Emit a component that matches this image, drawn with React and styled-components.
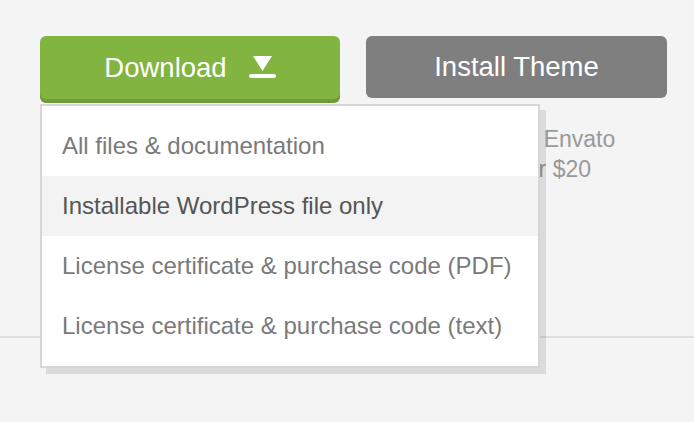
import React from "react";
import styled, { createGlobalStyle } from "styled-components";

const Global = createGlobalStyle`
  html, body { margin: 0; padding: 0; background: #f4f4f4; }
  body { font-family: "Liberation Sans", Helvetica, Arial, sans-serif; }
  * { box-sizing: border-box; }
`;

const Page = styled.div`
  width: 694px;
  height: 422px;
  background: #f4f4f4;
  overflow: hidden;
`;

const Section = styled.section`
  display: grid;
  grid-template-columns: 300px 301px;
  column-gap: 26px;
  padding: 36px 27px 0 40px;
  height: 338px;
  border-bottom: 2px solid #dedede;
`;

const Column = styled.div`
  position: relative;
  display: flex;
  flex-direction: column;
`;

const Button = styled.button`
  display: flex;
  align-items: center;
  justify-content: center;
  gap: 22px;
  width: 100%;
  height: ${(p) => (p.$primary ? "63px" : "62px")};
  border: 0;
  border-radius: 6px;
  padding: 0;
  background: ${(p) => (p.$primary ? "#82b440" : "#7f7f7f")};
  box-shadow: ${(p) => (p.$primary ? "0 4px 0 #6f9a37" : "none")};
  color: #fff;
  font-family: inherit;
  font-size: 27.5px;
  cursor: pointer;
`;

const Info = styled.p`
  margin: 26px 0 0;
  font-size: 23px;
  line-height: 30px;
  color: #999;
  white-space: nowrap;
`;

const Menu = styled.ul`
  position: absolute;
  top: 68px;
  left: 0;
  width: 500px;
  margin: 0;
  padding: 10px 0;
  list-style: none;
  background: #fff;
  border: 2px solid #d6d6d6;
  box-shadow: 6px 6px 0 rgba(0, 0, 0, 0.1);
  z-index: 2;
`;

const Item = styled.li`
  height: 60px;
  display: flex;
  align-items: center;
  padding-left: 20px;
  font-size: 24px;
  color: ${(p) => (p.$active ? "#555" : "#7a7a7a")};
  background: ${(p) => (p.$active ? "#f3f3f3" : "transparent")};
  white-space: nowrap;
`;

const DownloadIcon = () => (
  <svg width="27" height="23" viewBox="0 0 27 23" aria-hidden="true">
    <path d="M4 0 H23 L13.5 15 Z" fill="#fff" />
    <rect x="0" y="18" width="27" height="4" rx="2" fill="#fff" />
  </svg>
);

const items = [
  "All files & documentation",
  "Installable WordPress file only",
  "License certificate & purchase code (PDF)",
  "License certificate & purchase code (text)",
];

export default function App() {
  return (
    <Page>
      <Global />
      <Section>
        <Column>
          <Button $primary>
            <span>Download</span>
            <DownloadIcon />
          </Button>
          <Menu>
            {items.map((t, i) => (
              <Item key={t} $active={i === 1}>
                {t}
              </Item>
            ))}
          </Menu>
        </Column>
        <Column>
          <Button>Install Theme</Button>
          <Info>
            Have it set up by Envato
            <br />
            Studio experts for $20
          </Info>
        </Column>
      </Section>
    </Page>
  );
}
